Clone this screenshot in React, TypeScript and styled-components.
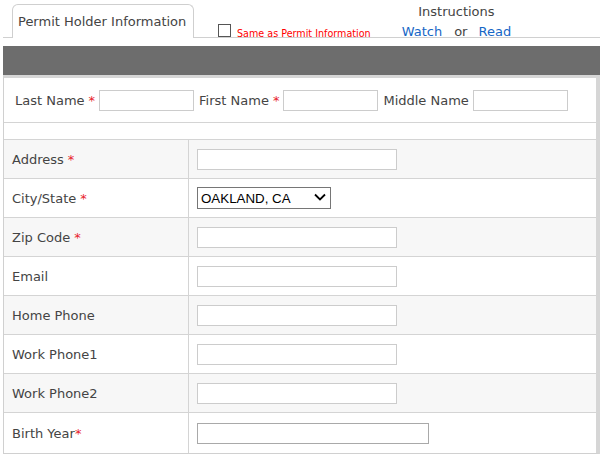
import React from "react";
import styled, { createGlobalStyle } from "styled-components";

const Global = createGlobalStyle`
  html, body { margin: 0; padding: 0; background: #fff; }
  body { font-family: "DejaVu Sans", Verdana, sans-serif; font-size: 13px; color: #444; }
  * { box-sizing: border-box; }
`;

const Page = styled.div`
  padding: 0 7px 0 3px;
  width: 607px;
`;

const Header = styled.div`
  display: flex;
  align-items: flex-end;
  height: 38px;
  border-bottom: 1px solid #d0d0d0;
  padding-left: 9px;
`;

const Tab = styled.div`
  width: 182px;
  height: 34px;
  margin-bottom: -1px;
  background: #fff;
  border: 1px solid #cfcfcf;
  border-bottom: none;
  border-radius: 6px 6px 0 0;
  padding: 9px 0 0 5px;
  font-size: 13px;
  color: #444;
  white-space: nowrap;
`;

const SameAs = styled.label`
  display: flex;
  align-items: flex-end;
  margin-left: 24px;
  gap: 6px;
  color: #f00;
  font-size: 9.6px;
  white-space: nowrap;
`;

const Check = styled.span`
  display: inline-block;
  width: 13px;
  height: 13px;
  border: 1px solid #555;
  background: #fff;
`;

const CheckText = styled.span`
  line-height: 10px;
  margin-bottom: -2px;
`;

const Instructions = styled.div`
  align-self: flex-start;
  display: flex;
  flex-direction: column;
  align-items: center;
  margin-left: 31px;
  padding-top: 2px;
  line-height: 20px;
  font-size: 13px;
  color: #444;
  white-space: nowrap;
`;

const LinkRow = styled.div`
  display: flex;
  align-items: baseline;
`;

const Link = styled.a`
  color: #1667c6;
  text-decoration: none;
`;

const Or = styled.span`
  margin: 0 11px 0 12px;
  color: #444;
`;

const DarkBar = styled.div`
  margin-top: 8px;
  height: 29px;
  background: #6d6d6d;
`;

const FormBox = styled.div`
  border-top: 3px solid #d6d6d6;
  border-left: 1px solid #d0d0d0;
  border-right: 4px solid #d6d6d6;
  border-bottom: 1px solid #d0d0d0;
`;

const NameRow = styled.div`
  display: flex;
  align-items: center;
  height: 45px;
  padding-left: 11px;
  border-bottom: 1px solid #d4d4d4;
  white-space: nowrap;
`;

const NameLabel = styled.span<{ $first?: boolean }>`
  margin-left: ${(p) => (p.$first ? "0" : "5px")};
  margin-right: 4px;
`;

const Req = styled.span<{ $tight?: boolean }>`
  color: #e8222b;
  margin-left: ${(p) => (p.$tight ? "0" : "4px")};
`;

const TextBox = styled.input<{ $w: number; $dark?: boolean }>`
  width: ${(p) => p.$w}px;
  height: 21px;
  border: 1px solid ${(p) => (p.$dark ? "#a9a9a9" : "#cccccc")};
  background: #fff;
  padding: 0 3px;
  margin: 0;
  font-family: "DejaVu Sans", sans-serif;
  font-size: 13px;
  outline: none;
`;

const Spacer = styled.div`
  height: 17px;
  border-bottom: 1px solid #d4d4d4;
`;

const Row = styled.div<{ $alt: boolean; $last?: boolean }>`
  display: grid;
  grid-template-columns: 185px 1fr;
  height: ${(p) => (p.$last ? "40px" : "39px")};
  background: ${(p) => (p.$alt ? "#f7f7f7" : "#fff")};
  border-bottom: ${(p) => (p.$last ? "none" : "1px solid #d4d4d4")};
`;

const LabelCell = styled.div`
  display: flex;
  align-items: center;
  padding-left: 8px;
  border-right: 1px solid #d4d4d4;
  white-space: nowrap;
`;

const FieldCell = styled.div`
  display: flex;
  align-items: center;
  padding-left: 8px;
`;

const SelectWrap = styled.div`
  position: relative;
  width: 134px;
  height: 22px;
`;

const Select = styled.select`
  appearance: none;
  -webkit-appearance: none;
  width: 134px;
  height: 22px;
  border: 1px solid #767676;
  border-radius: 0;
  background: #fff;
  padding: 0 0 0 3px;
  margin: 0;
  font-family: "Liberation Sans", Arial, sans-serif;
  font-size: 13.33px;
  color: #000;
  outline: none;
`;

const Chevron = styled.svg`
  position: absolute;
  right: 5px;
  top: 6px;
  pointer-events: none;
`;

type Field = { label: string; req?: boolean; tight?: boolean; kind?: "select"; w?: number; dark?: boolean };

const fields: Field[] = [
  { label: "Address", req: true },
  { label: "City/State", req: true, kind: "select" },
  { label: "Zip Code", req: true },
  { label: "Email" },
  { label: "Home Phone" },
  { label: "Work Phone1" },
  { label: "Work Phone2" },
  { label: "Birth Year", req: true, tight: true, w: 232, dark: true },
];

export default function App() {
  return (
    <Page>
      <Global />
      <Header>
        <Tab>Permit Holder Information</Tab>
        <SameAs>
          <Check />
          <CheckText>Same as Permit Information</CheckText>
        </SameAs>
        <Instructions>
          <span>Instructions</span>
          <LinkRow>
            <Link href="#">Watch</Link>
            <Or>or</Or>
            <Link href="#">Read</Link>
          </LinkRow>
        </Instructions>
      </Header>
      <DarkBar />
      <FormBox>
        <NameRow>
          <NameLabel $first>
            Last Name<Req>*</Req>
          </NameLabel>
          <TextBox $w={95} />
          <NameLabel>
            First Name<Req>*</Req>
          </NameLabel>
          <TextBox $w={95} />
          <NameLabel>Middle Name</NameLabel>
          <TextBox $w={95} />
        </NameRow>
        <Spacer />
        {fields.map((f, i) => (
          <Row key={f.label} $alt={i % 2 === 0} $last={i === fields.length - 1}>
            <LabelCell>
              {f.label}
              {f.req && <Req $tight={f.tight}>*</Req>}
            </LabelCell>
            <FieldCell>
              {f.kind === "select" ? (
                <SelectWrap>
                  <Select defaultValue="OAKLAND, CA">
                    <option>OAKLAND, CA</option>
                  </Select>
                  <Chevron width="12" height="9" viewBox="0 0 12 9">
                    <path d="M1 1.5 L6 6.5 L11 1.5" fill="none" stroke="#000" strokeWidth="1.8" />
                  </Chevron>
                </SelectWrap>
              ) : (
                <TextBox $w={f.w ?? 200} $dark={f.dark} />
              )}
            </FieldCell>
          </Row>
        ))}
      </FormBox>
    </Page>
  );
}
